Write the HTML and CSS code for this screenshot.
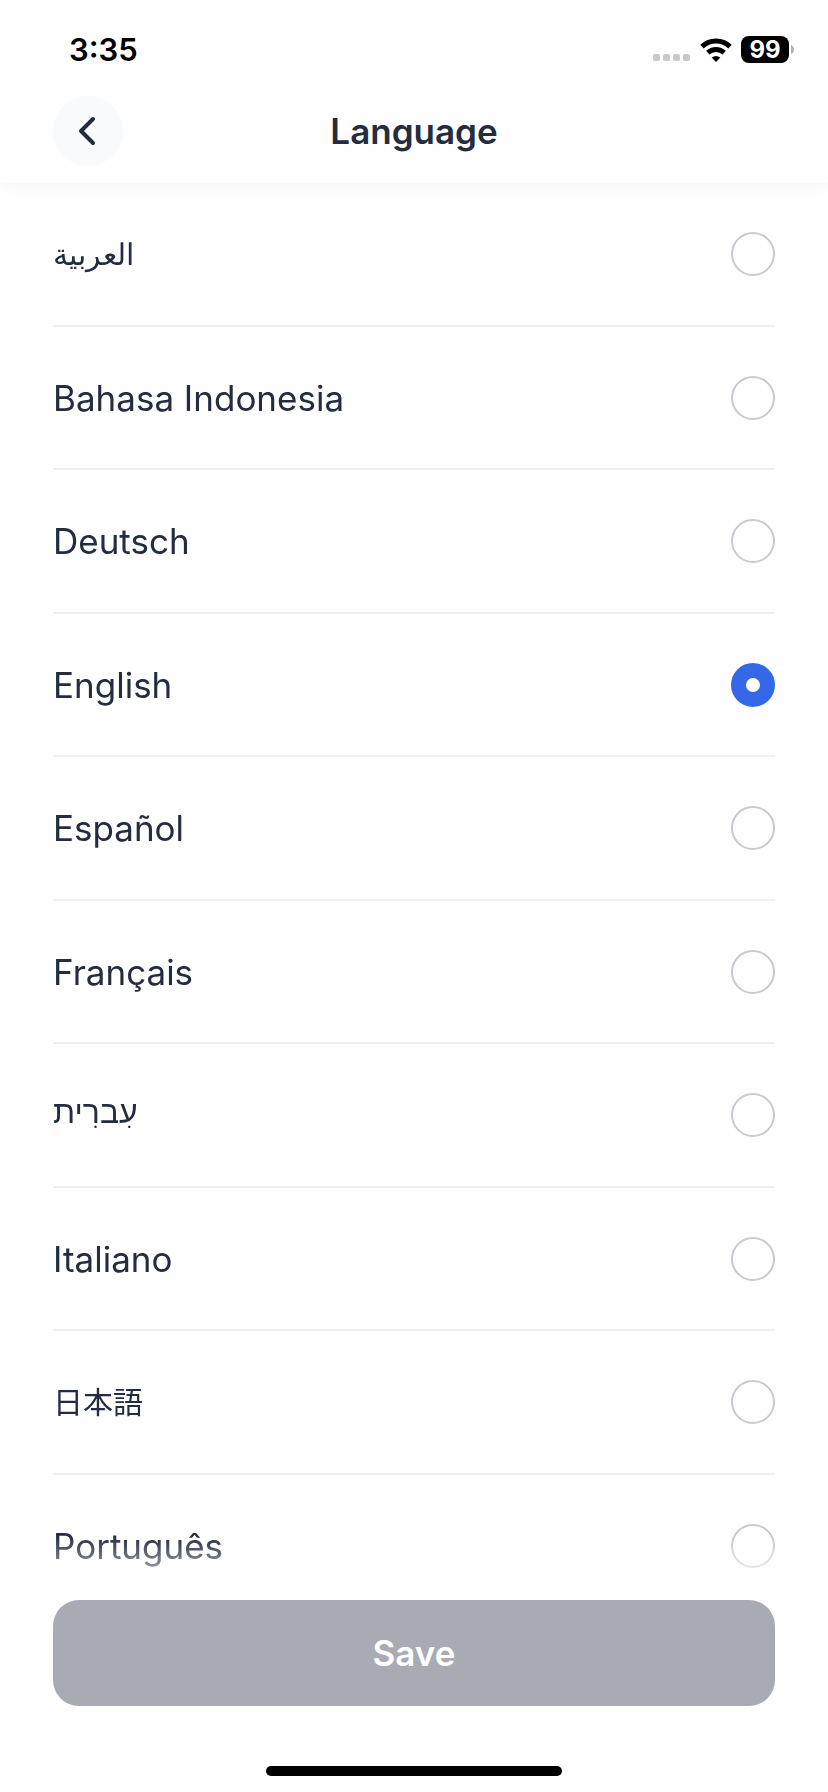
FILE: index.html
```html
<!DOCTYPE html>
<html lang="en">
<head>
    <meta charset="UTF-8">
    <meta name="viewport" content="width=device-width, initial-scale=1.0">
    <title>Language</title>
    <link rel="stylesheet" href="styles.css">
</head>
<body>
    <div class="screen">
        <header class="header">
            <div class="status-bar">
                <span class="time">3:35</span>
                <div class="status-icons">
                    <svg class="signal" width="38" height="28" viewBox="0 0 38 28" fill="#c9c9c9">
                        <rect x="0" y="18" width="7" height="7" rx="2"/>
                        <rect x="10" y="18" width="7" height="7" rx="2"/>
                        <rect x="20" y="18" width="7" height="7" rx="2"/>
                        <rect x="30" y="18" width="7" height="7" rx="2"/>
                    </svg>
                    <svg class="wifi" width="32" height="24" viewBox="0 0 32 24">
                        <g fill="none" stroke="#000" stroke-width="5">
                            <path d="M2 8.6 A20.4 20.4 0 0 1 30 8.6"/>
                            <path d="M7.8 14.6 A12.2 12.2 0 0 1 24.2 14.6"/>
                        </g>
                        <path d="M16 24 L11.7 19.6 Q16 16.2 20.3 19.6 Z"/>
                    </svg>
                    <div class="battery">
                        <span class="battery-level">99</span>
                        <svg width="3" height="9" viewBox="0 0 3 9"><path d="M0 0 Q3 1.5 3 4.5 T0 9 Z" fill="#b0b0b0"/></svg>
                    </div>
                </div>
            </div>
            <div class="nav">
                <button class="back" type="button" aria-label="Back">
                    <svg width="18" height="30" viewBox="0 0 18 30" fill="none" stroke="#242a42" stroke-width="4" stroke-linecap="round" stroke-linejoin="round">
                        <path d="M15 3 L3 15 L15 27"/>
                    </svg>
                </button>
                <h1 class="title">Language</h1>
            </div>
        </header>

        <form class="content">
            <div class="list">
                <label class="row"><span class="name arabic" lang="ar">العربية</span><input class="radio" type="radio" name="language"></label>
                <label class="row"><span class="name" lang="id">Bahasa Indonesia</span><input class="radio" type="radio" name="language"></label>
                <label class="row"><span class="name" lang="de">Deutsch</span><input class="radio" type="radio" name="language"></label>
                <label class="row"><span class="name">English</span><input class="radio" type="radio" name="language" checked></label>
                <label class="row"><span class="name" lang="es">Español</span><input class="radio" type="radio" name="language"></label>
                <label class="row"><span class="name" lang="fr">Français</span><input class="radio" type="radio" name="language"></label>
                <label class="row"><span class="name hebrew" lang="he">עִברִית</span><input class="radio" type="radio" name="language"></label>
                <label class="row"><span class="name" lang="it">Italiano</span><input class="radio" type="radio" name="language"></label>
                <label class="row"><span class="name japanese" lang="ja">日本語</span><input class="radio" type="radio" name="language"></label>
                <label class="row"><span class="name" lang="pt">Português</span><input class="radio" type="radio" name="language"></label>
            </div>
            <div class="footer">
                <button class="save" type="submit" disabled>Save</button>
                <div class="home-bar"></div>
            </div>
        </form>
    </div>
</body>
</html>
```

FILE: styles.css
```css
* {
    box-sizing: border-box;
}
body {
    margin: 0;
    background: #fefefe;
    color: #242c40;
    font-family: Inter, "Noto Sans CJK JP", sans-serif;
    font-size: 35px;
}

.screen {
    display: flex;
    flex-direction: column;
    height: 100vh;
    overflow: hidden;
}

/* status bar + title */
.header {
    padding-bottom: 17px;
    box-shadow: 0 2px 16px rgba(0, 0, 0, 0.04);
}
.status-bar {
    display: flex;
    align-items: center;
    justify-content: space-between;
    height: 96px;
    padding: 35px 34px 32px 69px;
    color: #000;
}
.time {
    font-size: 31px;
    font-weight: 600;
}
.status-icons {
    display: flex;
    align-items: center;
}
.wifi {
    margin-left: 9px;
}
.battery {
    display: flex;
    align-items: center;
    gap: 2px;
    margin-left: 9px;
}
.battery-level {
    width: 48px;
    border-radius: 8px;
    background: #000;
    color: #fff;
    font-size: 24px;
    font-weight: 700;
    line-height: 27px;
    text-align: center;
}
.nav {
    display: grid;
    grid-template-columns: 70px 1fr 70px;
    align-items: center;
    padding: 0 53px;
}
.back {
    display: flex;
    align-items: center;
    justify-content: center;
    width: 70px;
    height: 70px;
    padding: 0 2px 0 0;
    border: 0;
    border-radius: 50%;
    background: #f8fafc;
}
.title {
    margin: 0;
    font-size: 35px;
    font-weight: 600;
    text-align: center;
}

/* language list */
.content {
    display: flex;
    flex-direction: column;
    flex: 1;
    min-height: 0;
}
.list {
    flex: 1;
    min-height: 0;
    overflow: hidden;
    padding: 0 53px;
    -webkit-mask-image: linear-gradient(to top, transparent, #000 64px);
    mask-image: linear-gradient(to top, transparent, #000 64px);
}
.row {
    display: flex;
    align-items: center;
    justify-content: space-between;
    height: 144px;
    border-bottom: 2px solid #eff0f2;
}
.row:nth-child(even) {
    height: 143px;
}
.name {
    line-height: 44px;
}
.arabic {
    font-size: 30px;
}
.hebrew {
    padding-bottom: 6px;
    font-size: 32px;
}
.japanese {
    font-size: 30px;
}
.radio {
    appearance: none;
    width: 44px;
    height: 44px;
    margin: 0;
    border: 2px solid #c8cad2;
    border-radius: 50%;
}
.radio:checked {
    border: 15px solid #3568e8;
    background: #fff;
}

/* save button */
.footer {
    padding: 0 53px 16px;
}
.save {
    display: block;
    width: 100%;
    height: 106px;
    border: 0;
    border-radius: 26px;
    background: #a8abb4;
    color: #fff;
    font-family: inherit;
    font-size: 35px;
    font-weight: 600;
}
.home-bar {
    width: 296px;
    height: 10px;
    margin: 60px auto 0;
    border-radius: 5px;
    background: #000;
}
```
